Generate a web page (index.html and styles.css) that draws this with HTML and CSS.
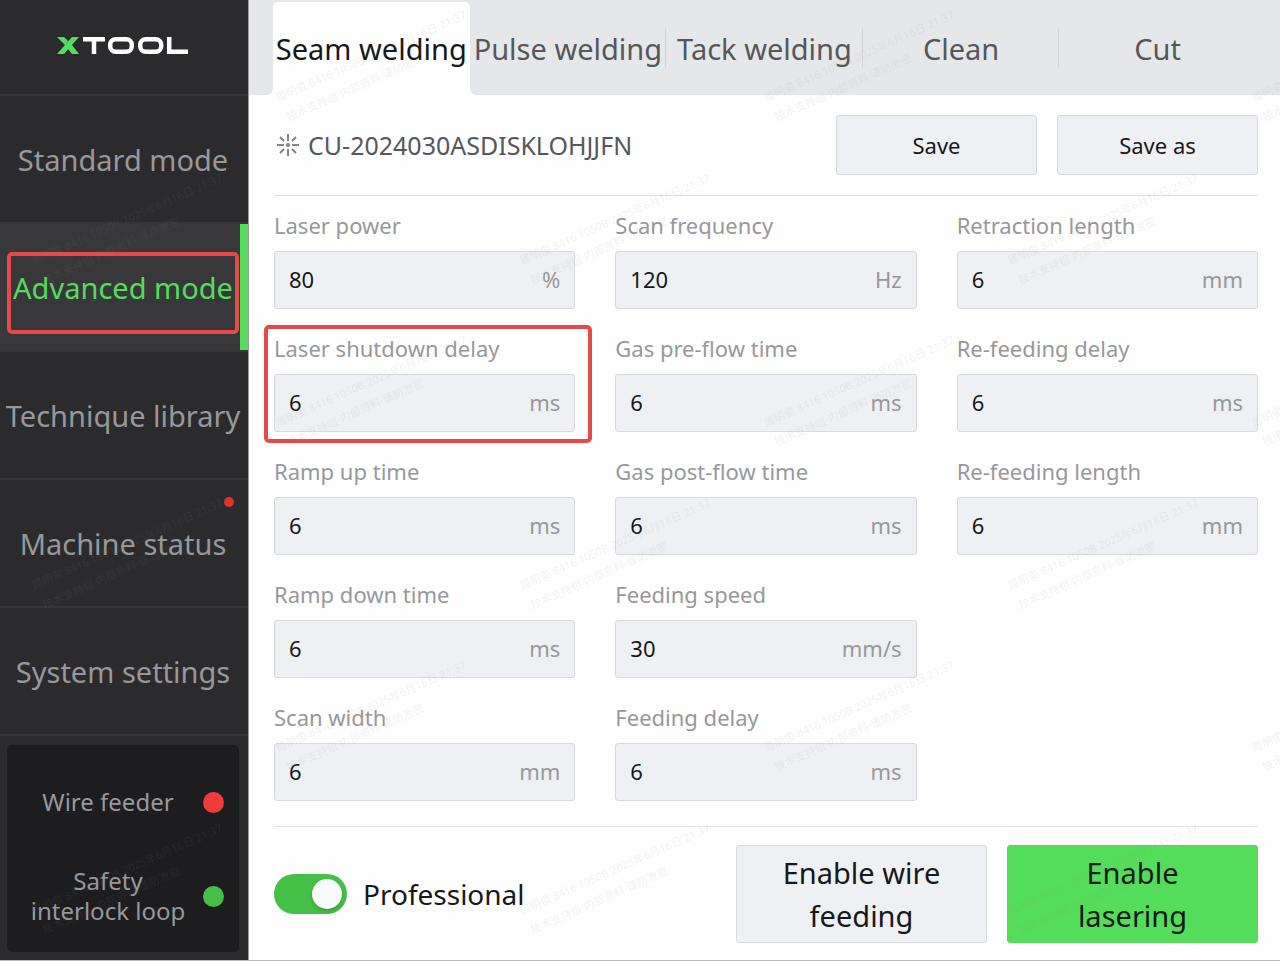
FILE: index.html
```
<!DOCTYPE html>
<html lang="en">
<head>
    <meta charset="UTF-8">
    <meta name="viewport" content="width=device-width, initial-scale=1.0">
    <title>xTool - Advanced mode</title>
    <link rel="stylesheet" href="styles.css">
</head>
<body>
    <div class="app">
        <aside class="sidebar">
            <div class="logo">
                <svg width="134" height="20" viewBox="0 0 134 20" role="img" aria-label="xTool">
                    <g fill="none" stroke="#fff" stroke-width="4.5">
                        <path d="M27 3.2h22M38 3v15"/>
                        <rect x="54.2" y="3.2" width="21.6" height="12.6" rx="5.5"/>
                        <rect x="84.2" y="3.2" width="21" height="12.6" rx="5.5"/>
                        <path d="M113.2 1v14.8H132"/>
                    </g>
                    <path fill="#54dd5a" d="M16 1h7L8 18H1zM1 1h7l4 4-3 4zM16 9l7 9h-7l-4-5z"/>
                </svg>
            </div>
            <nav class="menu">
                <a href="#standard">Standard mode</a>
                <a href="#advanced" class="active"><span class="mark"></span>Advanced mode</a>
                <a href="#library">Technique library</a>
                <a href="#status">Machine status<span class="badge"></span></a>
                <a href="#settings">System settings</a>
            </nav>
            <div class="status">
                <div class="status-row">
                    <span>Wire feeder</span>
                    <i class="dot red"></i>
                </div>
                <div class="status-row">
                    <span>Safety<br>interlock loop</span>
                    <i class="dot green"></i>
                </div>
            </div>
        </aside>

        <main class="content">
            <nav class="tabs">
                <button class="tab active">Seam welding</button>
                <button class="tab">Pulse welding</button>
                <button class="tab">Tack welding</button>
                <button class="tab">Clean</button>
                <button class="tab">Cut</button>
            </nav>

            <div class="panel">
                <header class="preset">
                    <svg width="24" height="24" viewBox="0 0 24 24" fill="none" stroke="#858587" stroke-width="2">
                        <path d="M12 1v7M12 16v7M1 12h7M16 12h7M4 4l4 4M16 16l4 4M20 4l-4 4M8 16l-4 4"/>
                        <circle cx="12" cy="12" r="2" fill="#858587" stroke="none"/>
                    </svg>
                    <h1>CU-2024030ASDISKLOHJJFN</h1>
                    <button class="btn">Save</button>
                    <button class="btn">Save as</button>
                </header>

                <form class="params">
                    <div class="column">
                        <div class="field">
                            <label for="power">Laser power</label>
                            <div class="box"><input id="power" type="text" value="80"><span>%</span></div>
                        </div>
                        <div class="field">
                            <span class="mark"></span>
                            <label for="shutdown">Laser shutdown delay</label>
                            <div class="box"><input id="shutdown" type="text" value="6"><span>ms</span></div>
                        </div>
                        <div class="field">
                            <label for="rampup">Ramp up time</label>
                            <div class="box"><input id="rampup" type="text" value="6"><span>ms</span></div>
                        </div>
                        <div class="field">
                            <label for="rampdown">Ramp down time</label>
                            <div class="box"><input id="rampdown" type="text" value="6"><span>ms</span></div>
                        </div>
                        <div class="field">
                            <label for="width">Scan width</label>
                            <div class="box"><input id="width" type="text" value="6"><span>mm</span></div>
                        </div>
                    </div>
                    <div class="column">
                        <div class="field">
                            <label for="frequency">Scan frequency</label>
                            <div class="box"><input id="frequency" type="text" value="120"><span>Hz</span></div>
                        </div>
                        <div class="field">
                            <label for="preflow">Gas pre-flow time</label>
                            <div class="box"><input id="preflow" type="text" value="6"><span>ms</span></div>
                        </div>
                        <div class="field">
                            <label for="postflow">Gas post-flow time</label>
                            <div class="box"><input id="postflow" type="text" value="6"><span>ms</span></div>
                        </div>
                        <div class="field">
                            <label for="speed">Feeding speed</label>
                            <div class="box"><input id="speed" type="text" value="30"><span>mm/s</span></div>
                        </div>
                        <div class="field">
                            <label for="delay">Feeding delay</label>
                            <div class="box"><input id="delay" type="text" value="6"><span>ms</span></div>
                        </div>
                    </div>
                    <div class="column">
                        <div class="field">
                            <label for="retraction">Retraction length</label>
                            <div class="box"><input id="retraction" type="text" value="6"><span>mm</span></div>
                        </div>
                        <div class="field">
                            <label for="refeed">Re-feeding delay</label>
                            <div class="box"><input id="refeed" type="text" value="6"><span>ms</span></div>
                        </div>
                        <div class="field">
                            <label for="refeedlength">Re-feeding length</label>
                            <div class="box"><input id="refeedlength" type="text" value="6"><span>mm</span></div>
                        </div>
                    </div>
                </form>

                <footer class="actions">
                    <label class="switch">
                        <input type="checkbox" checked>
                        Professional
                    </label>
                    <button class="btn big">Enable wire feeding</button>
                    <button class="btn big primary">Enable lasering</button>
                </footer>
            </div>
        </main>
    </div>

    <!-- Watermark over the whole screen -->
    <svg class="watermark" aria-hidden="true">
        <defs>
            <g id="wm" transform="rotate(-24)">
                <text>周明俊 8416 1050B 2025年6月16日 21:37</text>
                <text x="2" y="22">技术支持组·内部资料·谨防泄密</text>
            </g>
            <pattern id="wm-tile" width="488" height="325" patternUnits="userSpaceOnUse">
                <use href="#wm" x="34" y="265"/>
                <use href="#wm" x="278" y="102"/>
            </pattern>
        </defs>
        <rect width="100%" height="100%" fill="url(#wm-tile)"/>
    </svg>
</body>
</html>
```
FILE: styles.css
```
* {
    box-sizing: border-box;
}

body {
    margin: 0;
    font-family: "Noto Sans", "Noto Sans CJK SC", sans-serif;
    background-color: #fefefe;
    color: #17181a;
}

button,
input {
    font-family: inherit;
    color: inherit;
}

.app {
    display: flex;
    min-height: 100vh;
    border-bottom: 1px solid #b9b9bb;
}

/* Sidebar */
.sidebar {
    display: flex;
    flex-direction: column;
    flex: none;
    width: 249px;
    background-color: #2b2b2d;
    border-right: 1px solid #9b9b9d;
    color: #98989b;
}

.logo {
    display: flex;
    justify-content: center;
    padding: 36px 2px 38px 0;
}

.menu {
    border-bottom: 2px solid #363639;
}

.menu a {
    display: flex;
    align-items: center;
    justify-content: center;
    position: relative;
    height: 128px;
    padding-right: 2px;
    border-top: 2px solid #363639;
    font-size: 29px;
    white-space: nowrap;
    color: inherit;
    text-decoration: none;
}

.menu .active {
    background-color: #38383b;
    box-shadow: inset -8px 0 #54dd5a;
    color: #54dd5a;
}

.badge {
    position: absolute;
    top: 17px;
    right: 14px;
    width: 10px;
    height: 10px;
    border-radius: 50%;
    background-color: #e5302e;
}

.mark {
    position: absolute;
    border: 4px solid #e9484b;
    border-radius: 5px;
}

.menu .mark {
    inset: 28px 9px 16px 7px;
}

.status {
    display: flex;
    flex: 1;
    flex-direction: column;
    gap: 49px;
    margin: 9px 9px 8px 7px;
    padding: 42px 15px 25px 6px;
    border-radius: 5px;
    background-color: #1d1d20;
    font-size: 24px;
    line-height: 30px;
    text-align: center;
}

.status-row {
    display: flex;
    align-items: center;
}

.status-row span {
    flex: 1;
}

.dot {
    width: 21px;
    height: 21px;
    border-radius: 50%;
}

.red {
    background-color: #f03b38;
}

.green {
    background-color: #45c047;
}

/* Tabs */
.content {
    display: flex;
    flex: 1;
    flex-direction: column;
    min-width: 0;
}

.tabs {
    display: flex;
    height: 95px;
    padding: 0 24px;
    background-color: #e6e7ea;
}

.tab {
    display: flex;
    align-items: center;
    justify-content: center;
    flex: 1 1 0;
    min-width: 0;
    margin-top: 2px;
    padding: 0;
    border: none;
    background: linear-gradient(#d3d4d7, #d3d4d7) right 26px / 1px 40px no-repeat;
    font-size: 29px;
    white-space: nowrap;
    color: #56575a;
}

.tab:last-child {
    background: none;
}

.tab.active {
    position: relative;
    background: #fefefe;
    border-radius: 5px 5px 0 0;
    color: #17181a;
}

/* Rounded feet of the active tab */
.tab.active::before,
.tab.active::after {
    content: "";
    position: absolute;
    bottom: 0;
    width: 5px;
    height: 5px;
}

.tab.active::before {
    right: 100%;
    background: radial-gradient(circle at 0 0, #e6e7ea 4px, #fefefe 5px);
}

.tab.active::after {
    left: 100%;
    background: radial-gradient(circle at 100% 0, #e6e7ea 4px, #fefefe 5px);
}

/* Panel */
.panel {
    display: flex;
    flex: 1;
    flex-direction: column;
    padding: 0 22px 17px 25px;
}

.preset {
    display: flex;
    align-items: center;
    gap: 20px;
    padding: 20px 0;
    border-bottom: 1px solid #e2e3e4;
}

.preset svg {
    flex: none;
    margin-left: 2px;
}

.preset h1 {
    flex: 1;
    margin: 0 0 0 -12px;
    font-size: 25px;
    font-weight: 400;
    color: #56575a;
}

.btn {
    width: 201px;
    height: 60px;
    border: 1px solid #d8d9db;
    border-radius: 3px;
    background-color: #eff0f3;
    font-size: 22px;
}

.params {
    display: grid;
    grid-template-columns: repeat(3, minmax(0, 1fr));
    flex: 1;
    gap: 40px;
    padding-top: 14px;
    border-bottom: 1px solid #e2e3e4;
}

.field {
    position: relative;
    height: 123px;
}

.field label {
    display: block;
    height: 41px;
    font-size: 22px;
    line-height: 30px;
    color: #98989b;
}

.field .mark {
    inset: -8px -17px 13px -10px;
}

.box {
    display: flex;
    align-items: center;
    height: 58px;
    padding: 0 14px 2px;
    border: 1px solid #d8d9db;
    border-radius: 3px;
    background-color: #eff0f3;
    font-size: 22px;
    color: #98989b;
}

.box input {
    flex: 1;
    min-width: 0;
    padding: 0;
    border: none;
    outline: none;
    background: none;
    font-size: 22px;
    color: #17181a;
}

/* Bottom bar */
.actions {
    display: flex;
    align-items: center;
    gap: 20px;
    padding-top: 18px;
}

.switch {
    display: flex;
    align-items: center;
    flex: 1;
    gap: 16px;
    font-size: 28px;
}

.switch input {
    appearance: none;
    display: flex;
    justify-content: flex-end;
    width: 73px;
    height: 40px;
    margin: 0;
    padding: 5px;
    border-radius: 20px;
    background-color: #45c047;
}

.switch input::before {
    content: "";
    width: 30px;
    height: 30px;
    border-radius: 50%;
    background-color: #f9fafb;
    box-shadow: 0 2px 4px rgba(0, 0, 0, 0.2);
}

.switch input:not(:checked) {
    justify-content: flex-start;
    background-color: #b9b9bb;
}

.btn.big {
    width: 251px;
    height: 98px;
    padding: 0 40px;
    font-size: 29px;
    line-height: 43px;
}

.btn.primary {
    border-color: #54dd5a;
    background-color: #54dd5a;
}

.watermark {
    position: fixed;
    inset: 0;
    width: 100%;
    height: 100%;
    pointer-events: none;
    font-size: 11px;
    fill: #909090;
    opacity: 0.1;
}

.watermark text {
    fill: #909090;
}
```
